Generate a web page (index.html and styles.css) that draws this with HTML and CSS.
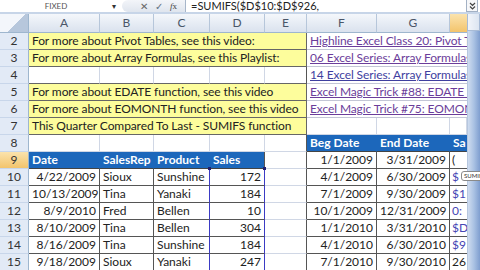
FILE: index.html
```html
<!DOCTYPE html>
<html lang="en">
<head>
    <meta charset="UTF-8">
    <title>SUMIFS - Quarter Compared To Last</title>
    <link rel="stylesheet" href="styles.css">
</head>
<body>
    <!-- formula bar -->
    <div class="fbar">
        <div class="namebox">FIXED</div>
        <div class="dd">&#9662;</div>
        <div class="fxbtns">
            <span class="grip"></span>
            <span class="btn x">&#10005;</span>
            <span class="btn ok">&#10003;</span>
            <span class="btn fx"><i>f</i>x</span>
        </div>
        <div class="formula">=SUMIFS($D$10:$D$926,</div>
        <div class="expand">
            <svg width="7" height="8" viewBox="0 0 7 8"><path d="M1 1 L3.5 3.5 L6 1 M1 4.5 L3.5 7 L6 4.5" fill="none" stroke="#444" stroke-width="1.2"/></svg>
        </div>
    </div>

    <div class="sheet">
        <div class="grid">
            <!-- column headers -->
            <div class="corner"></div>
            <div class="ch">A</div>
            <div class="ch">B</div>
            <div class="ch">C</div>
            <div class="ch">D</div>
            <div class="ch">E</div>
            <div class="ch">F</div>
            <div class="ch">G</div>
            <div class="ch active"></div>

            <!-- row 2 -->
            <div class="rh">2</div>
            <div class="c note">For more about Pivot Tables, see this video:</div>
            <div class="c lnk"><a>Highline Excel Class 20: Pivot Tables</a></div>

            <!-- row 3 -->
            <div class="rh">3</div>
            <div class="c note">For more about Array Formulas, see this Playlist:</div>
            <div class="c lnk"><a>06 Excel Series: Array Formulas Playlist</a></div>

            <!-- row 4 -->
            <div class="rh">4</div>
            <div class="c db"></div>
            <div class="c db"></div>
            <div class="c db"></div>
            <div class="c db"></div>
            <div class="c db dr"></div>
            <div class="c lnk"><a class="new">14 Excel Series: Array Formulas Part 2</a></div>

            <!-- row 5 -->
            <div class="rh">5</div>
            <div class="c note">For more about EDATE function, see this video</div>
            <div class="c lnk"><a>Excel Magic Trick #88: EDATE function</a></div>

            <!-- row 6 -->
            <div class="rh">6</div>
            <div class="c note">For more about EOMONTH function, see this video</div>
            <div class="c lnk"><a>Excel Magic Trick #75: EOMONTH function</a></div>

            <!-- row 7 -->
            <div class="rh">7</div>
            <div class="c note">This Quarter Compared To Last - SUMIFS function</div>
            <div class="c"></div>
            <div class="c"></div>
            <div class="c"></div>

            <!-- row 8 -->
            <div class="rh">8</div>
            <div class="c"></div>
            <div class="c"></div>
            <div class="c"></div>
            <div class="c"></div>
            <div class="c dr"></div>
            <div class="c hd">Beg Date</div>
            <div class="c hd">End Date</div>
            <div class="c hd">Sales</div>

            <!-- row 9 -->
            <div class="rh active">9</div>
            <div class="c hd">Date</div>
            <div class="c hd">SalesRep</div>
            <div class="c hd">Product</div>
            <div class="c hd last">Sales</div>
            <div class="c dr"></div>
            <div class="c t num">1/1/2009</div>
            <div class="c t num">3/31/2009</div>
            <div class="c t edit dark">(</div>

            <!-- row 10 -->
            <div class="rh">10</div>
            <div class="c t num">4/22/2009</div>
            <div class="c t">Sioux</div>
            <div class="c t rl">Sunshine</div>
            <div class="c t num rr first">172</div>
            <div class="c dr"></div>
            <div class="c t num">4/1/2009</div>
            <div class="c t num">6/30/2009</div>
            <div class="c t edit">$</div>

            <!-- row 11 -->
            <div class="rh">11</div>
            <div class="c t num">10/13/2009</div>
            <div class="c t">Tina</div>
            <div class="c t rl">Yanaki</div>
            <div class="c t num rr">184</div>
            <div class="c dr"></div>
            <div class="c t num">7/1/2009</div>
            <div class="c t num">9/30/2009</div>
            <div class="c t edit">$1</div>

            <!-- row 12 -->
            <div class="rh">12</div>
            <div class="c t num">8/9/2010</div>
            <div class="c t">Fred</div>
            <div class="c t rl">Bellen</div>
            <div class="c t num rr">10</div>
            <div class="c dr"></div>
            <div class="c t num">10/1/2009</div>
            <div class="c t num">12/31/2009</div>
            <div class="c t edit">0:</div>

            <!-- row 13 -->
            <div class="rh">13</div>
            <div class="c t num">8/10/2009</div>
            <div class="c t">Tina</div>
            <div class="c t rl">Bellen</div>
            <div class="c t num rr">304</div>
            <div class="c dr"></div>
            <div class="c t num">1/1/2010</div>
            <div class="c t num">3/31/2010</div>
            <div class="c t edit">$D</div>

            <!-- row 14 -->
            <div class="rh">14</div>
            <div class="c t num">8/16/2009</div>
            <div class="c t">Tina</div>
            <div class="c t rl">Sunshine</div>
            <div class="c t num rr">184</div>
            <div class="c dr"></div>
            <div class="c t num">4/1/2010</div>
            <div class="c t num">6/30/2010</div>
            <div class="c t edit">$9</div>

            <!-- row 15 -->
            <div class="rh">15</div>
            <div class="c t num">9/18/2009</div>
            <div class="c t">Sioux</div>
            <div class="c t rl">Yanaki</div>
            <div class="c t num rr">247</div>
            <div class="c dr"></div>
            <div class="c t num">7/1/2010</div>
            <div class="c t num">9/30/2010</div>
            <div class="c t edit dark">26</div>
        </div>

        <div class="vscroll">
            <div class="up"></div>
            <div class="thumb"></div>
        </div>
    </div>

    <!-- argument tooltip of the formula being typed -->
    <div class="tip">SUMIFS(sum_range, criteria_range1, criteria1, ...)</div>
</body>
</html>
```

FILE: styles.css
```css
body {
    margin: 0;
    width: 480px;
    height: 270px;
    overflow: hidden;
    position: relative;
    background: #fff;
    font-family: Lato, "Liberation Sans", sans-serif;
    font-size: 12px;
    color: #222;
}

/* formula bar */
.fbar {
    display: flex;
    height: 12px;
    border-bottom: 2px solid #c7d5e8;
    background: #fff;
}
.namebox {
    width: 112px;
    font-size: 8px;
    line-height: 12px;
    text-align: center;
    color: #555;
}
.dd {
    width: 10px;
    font-size: 8px;
    line-height: 12px;
    color: #333;
}
.fxbtns {
    width: 63px;
    display: flex;
    align-items: center;
    background: linear-gradient(#f3f5f9, #dfe5ee);
    border-radius: 6px 0 0 6px;
    border-right: 1px solid #a7b6ca;
}
.grip {
    width: 14px;
}
.btn {
    width: 15px;
    text-align: center;
    font-size: 10px;
    line-height: 12px;
}
.btn.x { color: #666; }
.btn.ok { color: #5f7083; }
.btn.fx {
    font-size: 9px;
    color: #444;
    font-family: "Liberation Serif", serif;
}
.formula {
    flex: 1;
    padding-left: 5px;
    font-size: 11px;
    line-height: 12px;
    color: #222;
}
.expand {
    width: 10px;
    margin: 0 2px 0 1px;
    border: 1px solid #a3b1c4;
    border-top: none;
    display: flex;
    align-items: center;
    justify-content: center;
    background: #f6f7f9;
}

/* sheet */
.sheet {
    display: flex;
}
.grid {
    display: grid;
    width: 467px;
    grid-template-columns: 29px 71px 54px 56px 55px 42px 70px 73px 17px;
    grid-template-rows: 19px;
    grid-auto-rows: 17px;
}
.corner {
    background: linear-gradient(135deg, #f3f6fb 55%, #b7c7dc 56%);
    border-right: 1px solid #9eb6ce;
    border-bottom: 1px solid #9eb6ce;
}
.ch {
    background: linear-gradient(#f4f7fb, #dae2ee);
    border-right: 1px solid #b6c6da;
    border-bottom: 1px solid #9eb6ce;
    text-align: center;
    line-height: 18px;
    color: #4a5668;
}
.ch.active {
    background: linear-gradient(#fbe3ad, #f3c46c);
    border-right: none;
}
.rh {
    background: #e2eaf6;
    border-right: 1px solid #9eb6ce;
    border-bottom: 1px solid #c8d6ea;
    text-align: center;
    line-height: 16px;
    color: #333;
}
.rh.active {
    background: linear-gradient(#fbe3ad, #f3c46c);
}

.c {
    border-right: 1px solid #d0d7e5;
    border-bottom: 1px solid #d0d7e5;
    padding: 0 3px;
    line-height: 16px;
    white-space: nowrap;
    overflow: hidden;
}
.note {
    grid-column: span 5;
    background: #fdfd9c;
    border-right-color: #666;
    border-bottom-color: #666;
    letter-spacing: -0.1px;
}
.lnk {
    grid-column: span 3;
    border-right: none;
    border-bottom-color: #c3c6d6;
}
.lnk a {
    color: #6b3d9a;
    text-decoration: underline;
    letter-spacing: -0.1px;
}
.lnk a.new {
    color: #3f3f9f;
}
.db { border-bottom-color: #666; }
.dr { border-right-color: #555; }

.hd {
    background: #1c67bb;
    color: #fff;
    font-weight: bold;
    border-right-color: #1c67bb;
    border-bottom-color: #444;
}
.hd.last { border-right-color: #555; }

.t {
    border-right-color: #555;
    border-bottom-color: #555;
}
.num { text-align: right; }

/* range highlight for $D$10:$D$926 */
.rl { border-right-color: #3b3bc4; }
.rr { border-right-color: #3b3bc4; }
.first { position: relative; overflow: visible; }
.first::before,
.first::after {
    content: "";
    position: absolute;
    top: -2px;
    width: 3px;
    height: 3px;
    background: #202070;
}
.first::before { left: -2px; }
.first::after { right: -2px; }

.edit {
    color: #4646b4;
    border-right: none;
    padding-left: 2px;
}
.edit.dark { color: #222; }

/* scrollbar */
.vscroll {
    width: 13px;
    height: 256px;
    display: flex;
    flex-direction: column;
    background: #d6e3f3;
}
.up {
    height: 16px;
    background: linear-gradient(90deg, #f2f5fa, #dce5f1);
    border: 1px solid #a8bbd6;
    border-top: none;
}
.thumb {
    flex: 1;
    background: linear-gradient(90deg, #cfdcef, #a9c1e3 50%, #7f9ecf);
    border-left: 1px solid #b6c7df;
}

.tip {
    position: absolute;
    left: 461px;
    top: 171px;
    height: 8px;
    padding: 0 2px;
    font-size: 6px;
    line-height: 8px;
    white-space: nowrap;
    color: #333;
    background: #fff;
    border: 1px solid #8a8a8a;
    border-radius: 3px;
}
```
